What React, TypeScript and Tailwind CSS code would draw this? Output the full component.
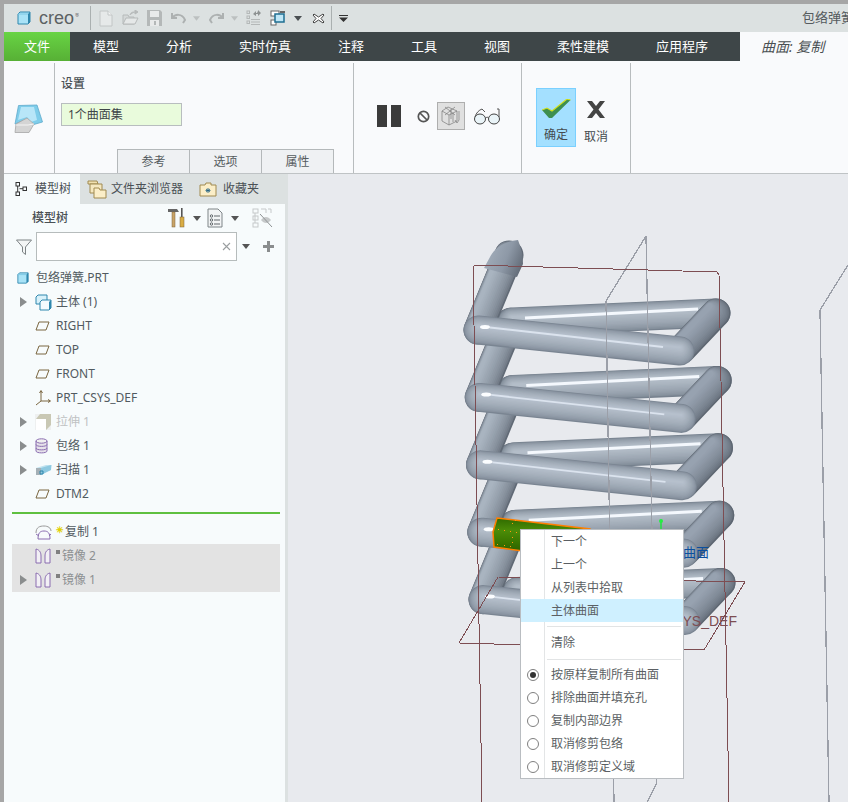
import React from "react";

const Caret = ({ c = "#4a4f52", w = 8, className = "" }: { c?: string; w?: number; className?: string }) => (
  <svg width={w} height={5} viewBox="0 0 8 5" className={className}><path d="M0 0H8L4 5Z" fill={c} /></svg>
);

const Cube = ({ s = 14 }: { s?: number }) => (
  <svg width={s} height={s} viewBox="0 0 14 14">
    <path d="M3 1H13V11L11 13H1V3Z" fill="#a9e3f7" stroke="#2f87ad" strokeWidth="1" />
    <path d="M11 3V13L13 11V1Z" fill="#2f87ad" />
    <path d="M1 3H11" stroke="#7cc7e4" strokeWidth="1" />
  </svg>
);

const TitleIcons = () => (
  <>
    <svg width="14" height="17" viewBox="0 0 14 17" className="ml-[8px]"><path d="M1 1H9L13 5V16H1Z" fill="#e6e9e9" stroke="#c2c6c6" /><path d="M9 1V5H13" fill="#f3f4f4" stroke="#c2c6c6" /></svg>
    <svg width="17" height="16" viewBox="0 0 17 16" className="ml-[9px]"><path d="M1 14V5H6L7 7H12V14Z" fill="#d4d8d8" stroke="#b6baba" /><path d="M1 14L4 8H16L13 14Z" fill="#e5e8e8" stroke="#b6baba" /><path d="M8 5C9 2 11 2 13 2M13 0L16 2L13 4Z" fill="#b6baba" stroke="#b6baba" /></svg>
    <svg width="15" height="16" viewBox="0 0 15 16" className="ml-[8px]"><path d="M0 0H13L15 2V16H0Z" fill="#b4b8b8" /><rect x="3" y="1" width="9" height="6" fill="#e8eaea" /><rect x="3" y="10" width="9" height="6" fill="#e8eaea" /><rect x="7" y="11" width="2" height="4" fill="#b4b8b8" /></svg>
    <svg width="15" height="12" viewBox="0 0 15 12" className="ml-[9px]"><path d="M1 1V6H6M1 6C4 2 11 1 14 8L12 11" fill="none" stroke="#adb1b1" strokeWidth="2" /></svg>
    <Caret c="#bcc0c0" w={7} className="ml-[7px]" />
    <svg width="15" height="12" viewBox="0 0 15 12" className="ml-[9px]"><path d="M14 1V6H9M14 6C11 2 4 1 1 8L3 11" fill="none" stroke="#adb1b1" strokeWidth="2" /></svg>
    <Caret c="#bcc0c0" w={7} className="ml-[7px]" />
    <svg width="15" height="16" viewBox="0 0 15 16" className="ml-[8px]"><g fill="none" stroke="#b4b8b8"><rect x="1" y="1" width="2.5" height="2.5" /><rect x="1" y="6" width="2.5" height="2.5" /><rect x="1" y="11" width="2.5" height="2.5" /><path d="M5 12H14M5 14.500H14M5 9.500H14" /></g><path d="M7 4L10 1V3H11L12 1V0L15 3L12 6V4H10V6Z" fill="#8d9191" /></svg>
    <svg width="16" height="16" viewBox="0 0 16 16" className="ml-[9px]"><rect x="1" y="1" width="8" height="5" fill="#fff" stroke="#666" /><rect x="1" y="10" width="5" height="5" fill="#fff" stroke="#666" /><rect x="5" y="4" width="9" height="8" fill="#bfe6f6" stroke="#1f6f92" strokeWidth="1.500" /><rect x="10" y="1" width="5" height="2" fill="#666" /></svg>
    <Caret w={8} className="ml-[8px]" />
    <svg width="13" height="11" viewBox="0 0 13 11" className="ml-[10px]"><path d="M2 1L6.500 4L11 1L12 2L9 5.500L12 9L11 10L6.500 7L2 10L1 9L4 5.500L1 2Z" fill="#fff" stroke="#444" /></svg>
    <div className="ml-[6px] h-6 w-px bg-[#aab0b0]" />
    <svg width="9" height="7" viewBox="0 0 9 7" className="ml-[7px]"><path d="M0 0H9V1H0ZM0 2.500H9L4.500 7Z" fill="#333" /></svg>
  </>
);

const Plane = () => (
  <svg width="15" height="10" viewBox="0 0 15 10"><path d="M4 1H14L11 9H1Z" fill="none" stroke="#7a6640" strokeWidth="1" /></svg>
);
const Csys = () => (
  <svg width="16" height="16" viewBox="0 0 16 16"><path d="M6 1V11L1 15M6 11H15" fill="none" stroke="#7a6640" /><path d="M4.500 3L6 0.500L7.500 3M13 9.500L15.500 11L13 12.500" fill="none" stroke="#7a6640" /></svg>
);
const Bodies = () => (
  <svg width="17" height="17" viewBox="0 0 17 17">
    <path d="M3 1H12V10H1V3Z" fill="#d8f1fa" stroke="#2f87ad" />
    <path d="M7 6H16V14L14 16H5V8Z" fill="#f4fbfe" stroke="#2f87ad" />
    <path d="M14 8V16L16 14V6Z" fill="#2f87ad" />
  </svg>
);
const Extrude = () => (
  <svg width="16" height="16" viewBox="0 0 16 16"><rect width="16" height="16" fill="#eef0f0" /><path d="M5 0H16V11L11 16V5H1Z" fill="#c9c8b4" /><path d="M1 5H11V16H1Z" fill="#fff" /></svg>
);
const Wrap = () => (
  <svg width="13" height="16" viewBox="0 0 13 16">
    <path d="M1 3V13C1 15 12 15 12 13V3Z" fill="#e6e2ea" />
    <ellipse cx="6.500" cy="3" rx="5.500" ry="2.200" fill="#f0f0f0" stroke="#8a6db0" />
    <path d="M1 3V13C1 15.500 12 15.500 12 13V3M1 6.500C1 9 12 9 12 6.500M1 10C1 12.500 12 12.500 12 10" fill="none" stroke="#8a6db0" />
  </svg>
);
const Sweep = () => (
  <svg width="17" height="12" viewBox="0 0 17 12">
    <path d="M1 4L11 1H17L16 6L6 9Z" fill="#bfe2ef" />
    <path d="M1 4H6V11H1Z" fill="#a5b0b6" />
    <path d="M6 4L16 1V6L6 11Z" fill="#8ec9e0" />
    <path d="M5 7H8V10H5Z" fill="none" stroke="#2f87ad" />
  </svg>
);
const CopyIcon = () => (
  <svg width="17" height="15" viewBox="0 0 17 15"><path d="M1 8C1 2 5 1 9 1C13 1 16 3 16 6" fill="none" stroke="#9a9a9a" /><path d="M3 14C3 8 5 6 9 6C13 6 15 8 15 14M1 9L4 11M16 9L14 11M3 14H15" fill="none" stroke="#8a6db0" /></svg>
);
const Mirror = () => (
  <svg width="16" height="16" viewBox="0 0 16 16"><path d="M1 1C5 2 6 5 6 8V15H1ZM15 1C11 2 10 5 10 8V15H15Z" fill="#f2f0f5" stroke="#8a6db0" /></svg>
);

const Arrow = () => (
  <svg width="8" height="10" viewBox="0 0 8 10"><path d="M0 0L7 5L0 10Z" fill="#8a8d8e" /></svg>
);

type Row = { icon: React.ReactNode; label: string; arrow?: boolean; muted?: boolean };
const rows: Row[] = [
  { icon: <Bodies />, label: "主体 (1)", arrow: true },
  { icon: <Plane />, label: "RIGHT" },
  { icon: <Plane />, label: "TOP" },
  { icon: <Plane />, label: "FRONT" },
  { icon: <Csys />, label: "PRT_CSYS_DEF" },
  { icon: <Extrude />, label: "拉伸 1", arrow: true, muted: true },
  { icon: <Wrap />, label: "包络 1", arrow: true },
  { icon: <Sweep />, label: "扫描 1", arrow: true },
  { icon: <Plane />, label: "DTM2" },
];

const TreeRow = ({ r }: { r: Row }) => (
  <div className="flex h-6 items-center">
    <div className="flex w-[31px] flex-none justify-end pr-[7px]">{r.arrow && <Arrow />}</div>
    <div className="flex w-[21px] flex-none items-center justify-start">{r.icon}</div>
    <span className={r.muted ? "text-[#bfc2c3]" : "text-[#515a60]"}>{r.label}</span>
  </div>
);

type L = { w: number; c: string; dx: number; dy: number };
const hex = (s: string) => [1, 3, 5].map((k) => parseInt(s.slice(k, k + 2), 16));
const ramp = (w0: number, w1: number, c0: string, c1: string, dx: number, dy: number, n = 14): L[] => {
  const a = hex(c0);
  const b = hex(c1);
  return Array.from({ length: n }, (_, i) => {
    const t = i / (n - 1);
    const e = Math.pow(t, 0.55);
    const m = a.map((v, k) => Math.round(v + (b[k] - v) * e));
    return { w: w0 + (w1 - w0) * t, c: `rgb(${m[0]},${m[1]},${m[2]})`, dx: dx * t, dy: dy * t };
  });
};
const frontL = ramp(29, 2, "#7a8592", "#b6c0cc", 0, -3.5);
const backL = ramp(29, 3, "#76818e", "#b4bec9", 0, -4.5);
const diagRL = ramp(29, 6, "#5e6772", "#97a2b0", -6.5, -6.5);
const diagL = ramp(29, 4, "#616a76", "#a9b4c0", -9, -3.5);

const Tube = ({ d, layers }: { d: string; layers: L[] }) => (
  <g fill="none" strokeLinecap="round" strokeLinejoin="round">
    {layers.map((l, i) => (
      <path key={i} d={d} stroke={l.c} strokeWidth={l.w} transform={`translate(${l.dx} ${l.dy})`} />
    ))}
  </g>
);

const Coil = ({ i }: { i: number }) => (
  <g transform={`translate(${1.25 * i} ${67.4 * i})`}>
    <Tube d="M716 313L512 322" layers={backL} />
    <path d="M525 318L698 309" stroke="#f4f8fd" strokeWidth="3" fill="none" />
    <Tube d="M716 313L682 349" layers={diagRL} />
    <Tube d="M478 330L509 255" layers={diagL} />
    <Tube d="M478 330L680 351" layers={frontL} />
    <path d="M490 327.500L663 347" stroke="#dbe3ee" strokeWidth="1.800" fill="none" />
    <ellipse cx="485" cy="327" rx="5" ry="2" fill="#fbfdff" />
  </g>
);

const Model = () => (
  <svg width="560" height="628" viewBox="288 174 560 628" className="absolute left-0 top-0">
    <defs>
      <linearGradient id="sel" x1="0" y1="0" x2="0" y2="1">
        <stop offset="0" stopColor="#2f6a00" />
        <stop offset="0.3" stopColor="#4b8c08" />
        <stop offset="0.55" stopColor="#3b7800" />
        <stop offset="1" stopColor="#234f00" />
      </linearGradient>
      <linearGradient id="stub" gradientUnits="userSpaceOnUse" x1="490" y1="250" x2="524" y2="264">
        <stop offset="0" stopColor="#a0abb8" />
        <stop offset="0.5" stopColor="#8d98a6" />
        <stop offset="1" stopColor="#616a76" />
      </linearGradient>
    </defs>
    {[4, 3, 2, 1, 0].map((i) => <Coil key={i} i={i} />)}
    <path d="M490 257C495 247 506 241 518 240C521 248 523 256 523 264L517 277L484 268Z" fill="url(#stub)" />
    <path d="M497 518L590 529L590 560L494 547L493 532Z" fill="url(#sel)" stroke="#ff7f00" strokeWidth="1.500" />
    <g fill="#ff9a10">
      {[[498, 529], [504, 530], [510, 531], [516, 532], [512, 523], [512, 537], [512, 542], [497, 544], [504, 545], [510, 546], [515, 520]].map(([x, y], k) => (
        <rect key={k} x={x} y={y} width="1" height="1" />
      ))}
    </g>
    <g fill="none" stroke="#9b9fa8" strokeWidth="1.300" shapeRendering="crispEdges">
      <path d="M646 236L606 301L614 802" />
      <path d="M646 236L657 778L656 785L647 802" />
      <path d="M848 265L820 310L829 802" />
    </g>
    <g fill="none" stroke="#7d4d52" strokeWidth="1" shapeRendering="crispEdges">
      <path d="M473 265L717 272L719 275L729 802" />
      <path d="M473 265L482 802" />
      <path d="M459 643L498 577L745 582L704 650L459 643" />
    </g>
    <path d="M661 521V530" stroke="#22e040" strokeWidth="1.500" />
    <circle cx="661" cy="521" r="2" fill="#22f040" />
    <text x="709" y="557" textAnchor="end" fontSize="13" fill="#0b4f9e">主体曲面</text>
    <text x="737" y="626" textAnchor="end" fontSize="14" fill="#7d4d52" fontFamily="Liberation Sans">PRT_CSYS_DEF</text>
  </svg>
);

const Radio = ({ on }: { on?: boolean }) => (
  <span className="flex h-3 w-3 items-center justify-center rounded-full border border-[#7f7f7f] bg-white">
    {on && <span className="h-[6px] w-[6px] rounded-full bg-[#333]" />}
  </span>
);

const MenuRow = ({ label, h = "h-[23px]", radio, on, hot }: { label: string; h?: string; radio?: boolean; on?: boolean; hot?: boolean }) => (
  <div className={`flex items-center ${h} ${hot ? "bg-[#cff0ff]" : ""}`}>
    <div className={`flex h-full w-[24px] flex-none items-center justify-center ${hot ? "" : "border-r border-[#e3e5e6]"}`}>
      {radio && <Radio on={on} />}
    </div>
    <span className="ml-[6px]">{label}</span>
  </div>
);

const MenuSep = ({ h }: { h: string }) => (
  <div className={`flex items-center ${h}`}>
    <div className="h-full w-[24px] flex-none border-r border-[#e3e5e6]" />
    <div className="ml-[2px] mr-[2px] h-px flex-1 bg-[#e2e4e5]" />
  </div>
);

const ContextMenu = () => (
  <div className="absolute left-[232px] top-[355px] w-[164px] border border-[#b9bdc1] bg-white text-[12px] text-[#5b5f63]">
    <MenuRow label="下一个" />
    <MenuRow label="上一个" />
    <MenuRow label="从列表中拾取" />
    <MenuRow label="主体曲面" hot />
    <MenuSep h="h-[9px]" />
    <MenuRow label="清除" h="h-[24px]" />
    <MenuSep h="h-[8px]" />
    <MenuRow label="按原样复制所有曲面" radio on />
    <MenuRow label="排除曲面并填充孔" radio />
    <MenuRow label="复制内部边界" radio />
    <MenuRow label="取消修剪包络" radio />
    <MenuRow label="取消修剪定义域" radio />
  </div>
);

export default function App() {
  const menus = ["模型", "分析", "实时仿真", "注释", "工具", "视图", "柔性建模", "应用程序"];
  return (
    <div className="flex h-[802px] w-[848px] flex-col overflow-hidden bg-[#a6a6a6] pl-1 pt-1 font-['Noto_Sans','Noto_Sans_CJK_SC',sans-serif] text-[12px] text-[#515a60]">
      {/* title bar */}
      <div className="flex h-[28px] flex-none items-center bg-[#dce1e1]">
        <div className="flex w-[798px] flex-none items-center">
          <div className="ml-[13px]"><Cube /></div>
          <span className="ml-[8px] w-[36px] font-['Liberation_Sans',sans-serif] text-[18px] leading-none text-[#5c6163]">creo</span>
          <span className="mb-[6px] w-[4px] overflow-hidden text-[5px] leading-none text-[#5c6163]">®</span>
          <div className="ml-[11px] h-6 w-px bg-[#aab0b0]" />
          <TitleIcons />
        </div>
        <span className="whitespace-nowrap text-[13px] text-[#555b5e]">包络弹簧.PRT</span>
      </div>

      {/* menu bar */}
      <div className="flex h-[29px] flex-none items-center bg-[#f9fafc] text-[13px]">
        <div className="flex h-full w-[66px] flex-none items-center justify-center bg-gradient-to-b from-[#68d444] to-[#57b035] text-white">文件</div>
        <div className="flex h-full w-[670px] flex-none items-center bg-[#3e4648] pl-[23px] text-white">
          {menus.map((m) => (
            <span key={m} className="mr-[47px] last:mr-0">{m}</span>
          ))}
        </div>
        <span className="ml-[21px] text-[14px] italic text-[#4a4f52]">曲面: 复制</span>
      </div>

      {/* ribbon */}
      <div className="flex h-[113px] flex-none border-b border-[#bfc3c5] bg-[#f9fafc] pt-[2px]">
        <div className="flex w-[51px] flex-none items-center justify-center border-r border-[#b8bcbe] pr-[1px]">
          <svg width="29" height="30" viewBox="0 0 29 30" className="mt-[2px]">
            <path d="M4.500 1.500L23 1L28.500 18L18 21L13 15L1 20Z" fill="#7fcdea" stroke="#5fa9cc" strokeWidth="0.800" />
            <path d="M7 3H20L23 16L17 18L13 13L4 16Z" fill="#b8e6f8" />
            <path d="M1 28.500L2 20L13 14L20 20L15 28.500Z" fill="#d4d4d4" stroke="#a6a6a6" strokeWidth="0.800" />
            <path d="M2 21L14 21L20 20" fill="none" stroke="#f4f4f4" />
          </svg>
        </div>
        <div className="relative w-[299px] flex-none border-r border-[#b8bcbe]">
          <div className="pl-[6px] pt-[12px] font-medium text-[#4c5256]">设置</div>
          <div className="ml-[6px] mt-[10px] flex h-[23px] w-[121px] items-center border border-[#b8bdbf] bg-[#e9fbdc] pl-[6px] text-[#3f4548]">1个曲面集</div>
          <div className="absolute bottom-0 left-[62px] flex">
            {["参考", "选项", "属性"].map((t) => (
              <div key={t} className="-mr-px flex h-[24px] w-[73px] items-center justify-center border border-b-0 border-[#b4b8ba] bg-[#eff1f3] text-[#555b5e]">{t}</div>
            ))}
          </div>
        </div>
        <div className="flex w-[168px] flex-none items-center border-r border-[#b8bcbe] pb-[4px] pl-[23px]">
          <div className="h-[22px] w-[10px] bg-[#3b3b3b]" />
          <div className="ml-[4px] h-[22px] w-[10px] bg-[#3b3b3b]" />
          <svg width="13" height="13" viewBox="0 0 13 13" className="ml-[16px]"><circle cx="6.500" cy="6.500" r="5.200" fill="none" stroke="#555" strokeWidth="1.700" /><path d="M3 3L10 10" stroke="#555" strokeWidth="1.700" /></svg>
          <div className="ml-[7px] flex h-[28px] w-[28px] items-center justify-center border border-[#aeaeae] bg-[#e0e0e0]">
            <svg width="20" height="20" viewBox="0 0 20 20"><g fill="none" stroke="#7a7a7a" strokeWidth="0.700"><path d="M1 5L8 9V19L1 15ZM8 9L16 5V15L8 19M1 5L7 1L16 5M4 1L14 9M14 1L4 9M12 7V16M10 3V13M18 5V14L16 17L14 14" /></g></svg>
          </div>
          <svg width="28" height="17" viewBox="0 0 28 17" className="ml-[8px]"><path d="M2 9C3 5 6 2 9 1L12 4M26 9L26 1L24 1" fill="none" stroke="#555" /><ellipse cx="7" cy="11" rx="5.500" ry="5" fill="#eaf4f8" stroke="#444" /><ellipse cx="21" cy="11" rx="5.500" ry="5" fill="#eaf4f8" stroke="#444" /><path d="M12.500 10C14 9 14.500 9 15.500 10" fill="none" stroke="#444" /></svg>
        </div>
        <div className="flex w-[109px] flex-none items-start border-r border-[#b8bcbe] pl-[14px] pt-[25px]">
          <div className="flex h-[59px] w-[40px] flex-col items-center border border-[#7bd0ff] bg-[#a4e0ff]">
            <svg width="29" height="19" viewBox="0 0 29 19" className="mt-[10px]"><path d="M0 11L5 9L10 12L25 0L28.500 1L10 19H7Z" fill="#3e8f4f" /><path d="M0 11L5 9L10 12L25 0L28.500 1" fill="none" stroke="#d3e21c" strokeWidth="1.100" /></svg>
            <span className="mt-[8px] text-[#454b4f]">确定</span>
          </div>
          <div className="flex w-[40px] flex-col items-center">
            <svg width="20" height="17" viewBox="0 0 20 17" className="mt-[13px]"><path d="M1 0H6L10 5L14 0H19L12.500 8.500L19 17H14L10 12L6 17H1L7.500 8.500Z" fill="#444" /></svg>
            <span className="mt-[10px] text-[#454b4f]">取消</span>
          </div>
        </div>
      </div>

      {/* body */}
      <div className="flex min-h-0 flex-1">
        <div className="flex w-[284px] flex-none flex-col bg-[#dce1e1] pr-[3px]">
          <div className="flex h-[30px] flex-none items-center">
            <div className="flex h-full w-[76px] flex-none items-center bg-[#f7fbfc] pl-[11px]">
              <svg width="14" height="14" viewBox="0 0 14 14"><g fill="none" stroke="#333"><rect x="1" y="0.500" width="3.500" height="3.500" /><rect x="8" y="5" width="3.500" height="3.500" /><rect x="1" y="10" width="3.500" height="3.500" /><path d="M2.700 4V10M4.500 6.700H8" /></g></svg>
              <span className="ml-[6px] text-[#4a5055]">模型树</span>
            </div>
            <svg width="20" height="20" viewBox="0 0 20 20" className="ml-[7px]"><path d="M1 2H10L11 5H1Z" fill="#f0e0b0" stroke="#a08a50" /><path d="M3 5H15V14H3Z" fill="#f5e8c0" stroke="#a08a50" /><path d="M7 9H12L13 11H19V19H7Z" fill="#fbeec8" stroke="#a08a50" /></svg>
            <span className="ml-[4px] text-[#4a5055]">文件夹浏览器</span>
            <svg width="18" height="15" viewBox="0 0 18 15" className="ml-[16px]"><path d="M1 3H6L7 1H12V3H17V14H1Z" fill="#fbeec8" stroke="#a08a50" /><path d="M9 6V11M6.500 8.500H11.500M7 7L11 10M11 7L7 10" stroke="#1f5f82" strokeWidth="0.800" /></svg>
            <span className="ml-[6px] text-[#4a5055]">收藏夹</span>
          </div>
          <div className="flex-1 bg-[#f7fbfc]">
            <div className="flex h-[28px] items-center">
              <span className="ml-[28px] font-medium text-[#4a5055]">模型树</span>
              <svg width="17" height="20" viewBox="0 0 17 20" className="ml-[100px]"><path d="M0 1H9L11 4H0Z" fill="#666" /><rect x="4" y="4" width="3" height="15" fill="#c9a468" stroke="#7c6238" strokeWidth="0.500" /><rect x="13" y="0" width="1.600" height="9" fill="#555" /><rect x="12" y="9" width="4" height="10" fill="#d9ad44" stroke="#7c6238" strokeWidth="0.500" /></svg>
              <Caret c="#555" w={8} className="ml-[8px]" />
              <svg width="16" height="20" viewBox="0 0 16 20" className="ml-[6px]"><path d="M1 1H11L15 5V19H1Z" fill="#f2f4f5" stroke="#7f8588" /><g fill="none" stroke="#60666a"><circle cx="4.500" cy="8" r="1.200" /><circle cx="4.500" cy="12" r="1.200" /><circle cx="4.500" cy="16" r="1.200" /><path d="M7 8H13M7 12H13M7 16H13" /></g></svg>
              <Caret c="#555" w={8} className="ml-[8px]" />
              <svg width="21" height="20" viewBox="0 0 21 20" className="ml-[13px]"><g fill="none" stroke="#c6c9ca"><rect x="1" y="1" width="5" height="4" /><rect x="1" y="8" width="5" height="4" /><rect x="1" y="15" width="5" height="4" /><path d="M9 1H14V5M16 1H19V5M3 5V15" /></g><path d="M9 12C12 8 16 8 19 12C16 16 12 16 9 12Z" fill="#c6c9ca" /><path d="M8 6L20 19" stroke="#8f9395" /></svg>
            </div>
            <div className="flex h-[29px] items-center">
              <svg width="16" height="16" viewBox="0 0 16 16" className="ml-[12px]"><path d="M0.500 1H15.500L9.500 8V15.500L6.500 13V8Z" fill="#f3f5f5" stroke="#7d8385" /></svg>
              <div className="ml-[4px] flex h-[29px] w-[201px] items-center justify-end border border-[#b6bcbc] bg-white pr-[5px]">
                <svg width="9" height="9" viewBox="0 0 9 9"><path d="M1 1L8 8M8 1L1 8" stroke="#9a9ea0" strokeWidth="1.100" /></svg>
              </div>
              <Caret c="#555" w={8} className="ml-[5px]" />
              <svg width="11" height="11" viewBox="0 0 11 11" className="ml-[13px]"><path d="M4 0H7V4H11V7H7V11H4V7H0V4H4Z" fill="#8a8d8e" /></svg>
            </div>
            <div className="mt-[5px] flex h-6 items-center">
              <div className="ml-[13px] flex-none"><Cube s={12} /></div>
              <span className="ml-[7px] text-[#515a60]">包络弹簧.PRT</span>
            </div>
            {rows.map((r) => <TreeRow key={r.label} r={r} />)}
            <div className="ml-[8px] mt-[6px] h-[2px] w-[268px] bg-[#5fc040]" />
            <div className="mt-[6px] flex h-6 items-center">
              <div className="w-[31px] flex-none" />
              <div className="flex w-[21px] flex-none items-center"><CopyIcon /></div>
              <span className="relative -top-[3px] text-[9px] font-bold leading-none text-[#e0d000]">✳</span>
              <span className="ml-[1px] text-[#515a60]">复制 1</span>
            </div>
            <div className="ml-[8px] w-[268px] bg-[#e3e3e3]">
              {["镜像 2", "镜像 1"].map((t, i) => (
                <div key={t} className="flex h-6 items-center">
                  <div className="flex w-[23px] flex-none justify-end pr-[7px]">{i === 1 && <Arrow />}</div>
                  <div className="flex w-[21px] flex-none items-center"><Mirror /></div>
                  <span className="relative -top-[4px] h-[4px] w-[4px] bg-[#808080]" />
                  <span className="ml-[2px] text-[#8d9092]">{t}</span>
                </div>
              ))}
            </div>
          </div>
        </div>
        <div className="relative flex-1 bg-[#e8eaee]">
          <Model />
          <ContextMenu />
        </div>
      </div>
    </div>
  );
}
